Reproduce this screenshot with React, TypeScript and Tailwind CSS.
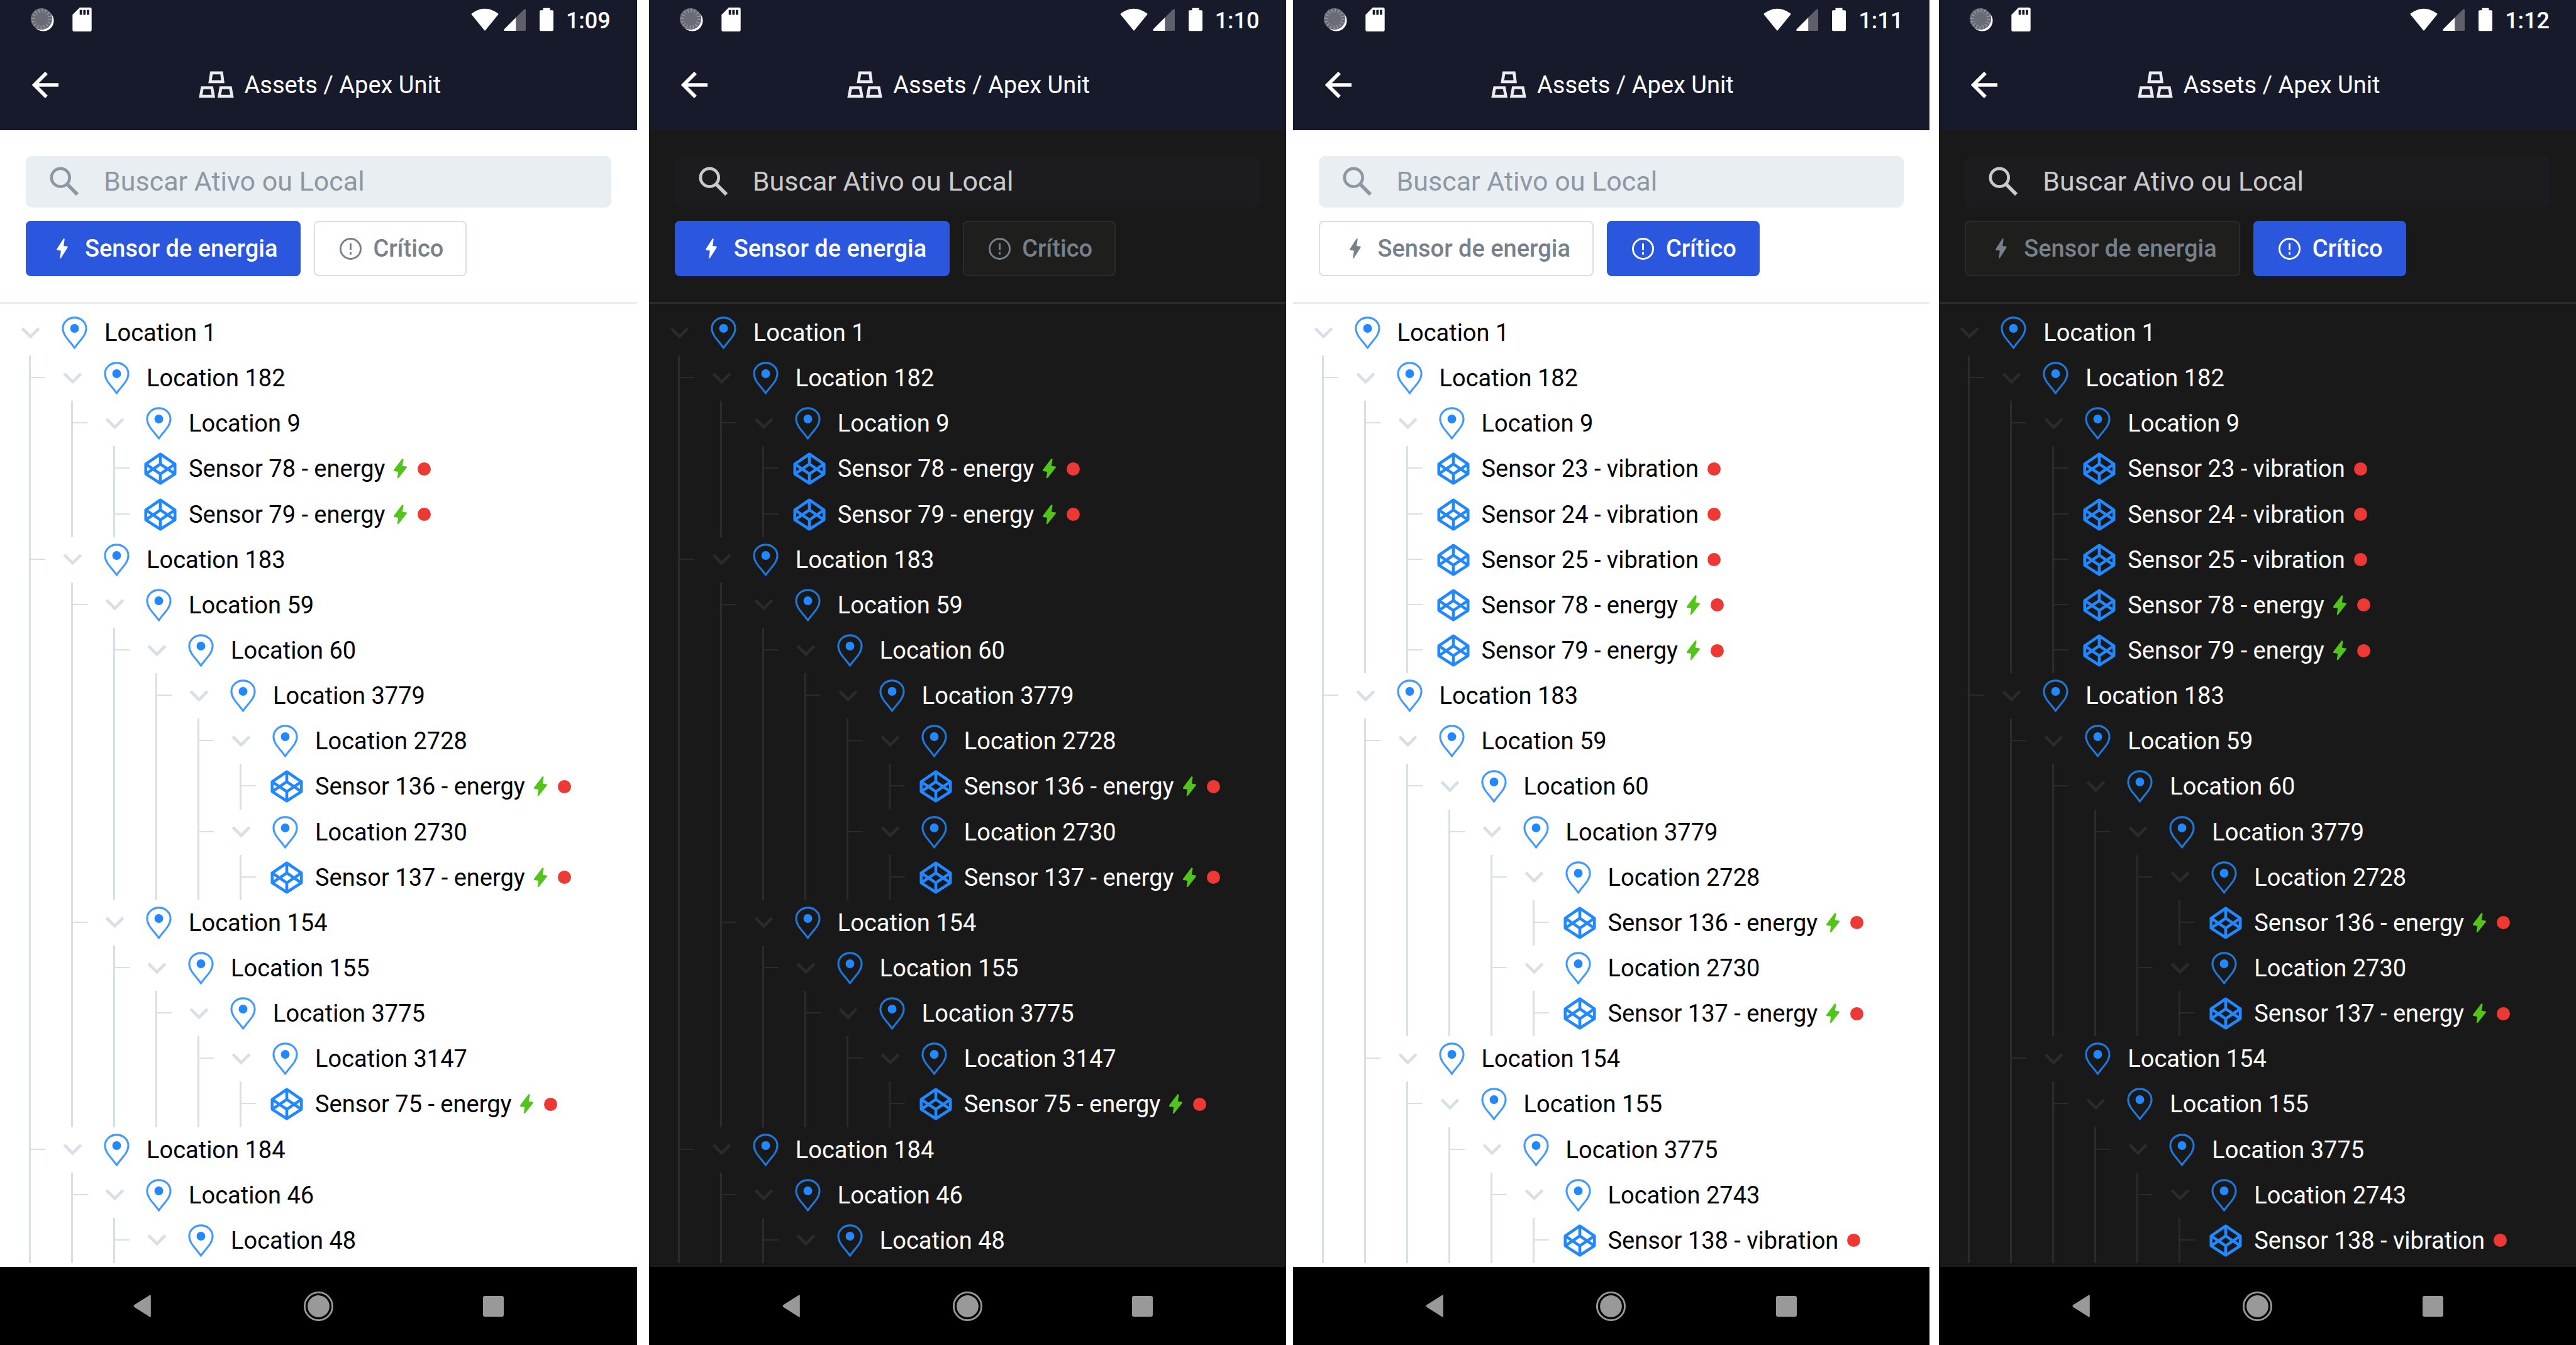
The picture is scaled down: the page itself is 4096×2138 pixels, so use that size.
import React from "react";

type Theme = {
  page: string;
  search: string;
  searchText: string;
  inactive: string;
  rule: string;
  line: string;
  chevron: string;
  label: string;
};

const light: Theme = {
  page: "bg-white",
  search: "bg-[#e9eef2]",
  searchText: "text-[#8e98a3] placeholder:text-[#8e98a3]",
  inactive: "bg-white border-[#d8dfe6] text-[#77818c]",
  rule: "border-[#e9eef2]",
  line: "bg-[#d8dfe6]",
  chevron: "text-[#d8dfe6]",
  label: "text-black",
};

const dark: Theme = {
  page: "bg-[#191919]",
  search: "bg-[#1c1b1f]",
  searchText: "text-[#cacaca] placeholder:text-[#cacaca]",
  inactive: "bg-[#1e1e1c] border-[#2b2b2b] text-[#77818c]",
  rule: "border-[#2b2b2b]",
  line: "bg-[#2b2b2b]",
  chevron: "text-[#2b2b2b]",
  label: "text-white",
};

type Row = { depth: number; name: string; kind: "location" | "energy" | "vibration" };

const loc = (depth: number, n: number): Row => ({ depth, name: `Location ${n}`, kind: "location" });
const energy = (depth: number, n: number): Row => ({ depth, name: `Sensor ${n} - energy`, kind: "energy" });
const vibration = (depth: number, n: number): Row => ({ depth, name: `Sensor ${n} - vibration`, kind: "vibration" });

const deepBranch: Row[] = [
  loc(1, 183), loc(2, 59), loc(3, 60), loc(4, 3779), loc(5, 2728), energy(5, 136),
  loc(5, 2730), energy(5, 137), loc(2, 154), loc(3, 155), loc(4, 3775),
];

const energyRows: Row[] = [
  loc(0, 1), loc(1, 182), loc(2, 9), energy(2, 78), energy(2, 79),
  ...deepBranch, loc(5, 3147), energy(5, 75), loc(1, 184), loc(2, 46), loc(3, 48),
];

const criticalRows: Row[] = [
  loc(0, 1), loc(1, 182), loc(2, 9), vibration(2, 23), vibration(2, 24), vibration(2, 25),
  energy(2, 78), energy(2, 79), ...deepBranch, loc(5, 2743), vibration(5, 138),
];

function PinIcon() {
  return (
    <svg viewBox="0 0 44 56" className="h-[52px] w-[41px] text-[#2188ff]" fill="none" aria-hidden="true">
      <path d="M22 54C14 42 2 33 2 20.500a20 18.500 0 0 1 40 0C42 33 30 42 22 54z" stroke="currentColor" strokeOpacity="0.85" strokeWidth="3.300" strokeLinejoin="round" />
      <circle cx="22" cy="20.500" r="7.500" fill="currentColor" />
    </svg>
  );
}

function CubeIcon() {
  return (
    <svg viewBox="0 0 56 56" className="size-[52px] text-[#2188ff]" fill="none" stroke="currentColor" strokeWidth="5" strokeLinejoin="round" aria-hidden="true">
      <path d="M28 3 53 20v17L28 53 3 37V20zM28 3v17M28 37v16M3 20l25 17 25-17M3 37l25-17 25 17" />
    </svg>
  );
}

function TreeRow({ row, theme }: { row: Row; theme: Theme }) {
  const isLocation = row.kind === "location";
  const guides = Array.from({ length: isLocation ? row.depth : row.depth + 1 });
  return (
    <li className="flex min-h-0 flex-1 items-center pl-[15px]">
      {guides.map((_, i) => (
        <span key={i} className="flex h-full w-[67px] shrink-0 pl-[31px]">
          <span className={`h-full w-[3px] ${theme.line}`} />
          {i === guides.length - 1 && <span className={`mt-[34px] h-0.5 w-[23px] ${theme.line}`} />}
        </span>
      ))}
      {isLocation && (
        <button type="button" aria-label={`Recolher ${row.name}`} className={`flex w-[67px] shrink-0 justify-center ${theme.chevron}`}>
          <svg viewBox="0 0 32 20" className="h-[19px] w-[31px]" fill="none" stroke="currentColor" strokeWidth="5" aria-hidden="true">
            <path d="M2 2 16 16 30 2" />
          </svg>
        </button>
      )}
      <span className={`flex w-[69px] shrink-0 items-center ${isLocation ? "pl-[16px]" : "pl-[13px]"}`}>
        {isLocation ? <PinIcon /> : <CubeIcon />}
      </span>
      <span className={`pl-[15px] text-[38px] leading-[56px] whitespace-nowrap ${theme.label}`}>{row.name}</span>
      <span className="flex items-center gap-[17px] pl-[14px]">
        {row.kind === "energy" && (
          <svg viewBox="0 0 67 100" className="h-[32px] w-[21px] text-[#52c41a]" fill="currentColor" aria-hidden="true">
            <path d="M43 0 50 2 44 36 67 40 66 45 25 97 18 99 23 66 0 62V56z" />
          </svg>
        )}
        {!isLocation && <span className="size-[21px] rounded-full bg-[#ed3833]" />}
      </span>
    </li>
  );
}

function StatusBar({ time }: { time: string }) {
  return (
    <div className="flex h-[62px] items-center pl-[48px] pr-[42px]">
      <svg viewBox="0 0 40 40" className="size-[38px]" aria-hidden="true">
        <circle cx="22" cy="22" r="17.500" fill="#fff" />
        <circle cx="19" cy="19" r="18" fill="#696b77" />
        <circle cx="19" cy="19" r="14" fill="none" stroke="#9c9da5" strokeWidth="6" strokeDasharray="1.500 4" />
      </svg>
      <svg viewBox="0 0 32 40" className="ml-[29px] h-[38px] w-[31px]" aria-hidden="true">
        <path d="M12 0h17a3 3 0 0 1 3 3v34a3 3 0 0 1-3 3H3a3 3 0 0 1-3-3V12z" fill="#fff" />
        <path d="M12 4h4v8h-4zM18 4h4v8h-4zM24 4h4v8h-4z" fill="#171a2b" />
      </svg>
      <div className="ml-auto flex items-center">
        <svg viewBox="0 0 48 40" className="h-[37px] w-[44px]" aria-hidden="true">
          <path d="M1 9Q24-8 47 9 48 10 47 11L25 38Q24 39.500 23 38L1 11Q0 10 1 9z" fill="#fff" />
        </svg>
        <svg viewBox="0 0 38 38" className="ml-[8px] size-[35px]" aria-hidden="true">
          <path d="M35 1q3-2 3 1v34q0 2-2 2H21V15z" fill="#5d5f6b" />
          <path d="M21 15v23H2Q-1 38 1 35z" fill="#fff" />
        </svg>
        <svg viewBox="0 0 24 40" className="ml-[22px] h-[38px] w-[22px]" aria-hidden="true">
          <path d="M6 0h12v4h4q2 0 2 2v32q0 2-2 2H2q-2 0-2-2V6q0-2 2-2h4z" fill="#fff" />
        </svg>
        <span className="ml-[20px] pt-[3px] text-[36px] font-medium leading-[44px] text-white">{time}</span>
      </div>
    </div>
  );
}

function Header() {
  return (
    <div className="flex h-[145px] items-center px-[51px]">
      <button type="button" aria-label="Voltar" className="text-white">
        <svg viewBox="0 0 44 44" className="size-[42px]" fill="none" stroke="currentColor" strokeWidth="6" aria-hidden="true">
          <path d="M44 22H4M24 2 4 22l20 20" />
        </svg>
      </button>
      <h1 className="flex flex-1 items-center justify-center gap-[17px] pr-[38px] text-[38px] leading-[48px] text-white">
        <svg viewBox="0 0 178 138" className="h-[43px] w-[56px]" fill="none" stroke="#ebecef" strokeWidth="15" aria-hidden="true">
          <path d="M64 9H116L122 54H57zM17 85H66L74 129H9zM112 85H161L169 129H104z" />
        </svg>
        Assets / Apex Unit
      </h1>
    </div>
  );
}

function FilterButton({ active, theme, icon, children }: { active: boolean; theme: Theme; icon: React.ReactNode; children: React.ReactNode }) {
  const tone = active ? "bg-[#2a57de] border-[#2a57de] text-white" : theme.inactive;
  return (
    <button type="button" aria-pressed={active} className={`flex h-[88px] items-center gap-[18px] rounded-[8px] border-2 pl-[38px] pr-[35px] text-[38px] font-medium leading-[48px] whitespace-nowrap ${tone}`}>
      <span className="flex w-[36px] justify-center">{icon}</span>
      <span>{children}</span>
    </button>
  );
}

function NavBar() {
  return (
    <nav className="flex h-[124px] shrink-0 items-center justify-center gap-[235px] bg-black">
      <button type="button" aria-label="Anterior">
        <svg viewBox="0 0 44 44" className="size-[40px]" fill="#999" aria-hidden="true">
          <path d="M35 4v36q0 2-2 1L6 24q-2-2 0-4L33 3q2-1 2 1z" />
        </svg>
      </button>
      <button type="button" aria-label="Início">
        <svg viewBox="0 0 50 50" className="size-[47px]" aria-hidden="true">
          <circle cx="25" cy="25" r="23.500" fill="none" stroke="#999" strokeWidth="3" />
          <circle cx="25" cy="25" r="18.500" fill="#999" />
        </svg>
      </button>
      <button type="button" aria-label="Recentes" className="flex w-[40px] justify-center">
        <span className="size-[33px] rounded-[3px] bg-[#999]" />
      </button>
    </nav>
  );
}

function Phone({ time, theme, filter, rows }: { time: string; theme: Theme; filter: "energy" | "critical"; rows: Row[] }) {
  return (
    <section className={`flex min-h-0 min-w-0 flex-col ${theme.page}`}>
      <header className="bg-[#171a2b]">
        <StatusBar time={time} />
        <Header />
      </header>
      <div className={`border-b-3 px-[41px] pt-[41px] pb-[41px] ${theme.rule}`}>
        <label className={`flex h-[82px] items-center rounded-[10px] pb-[2px] pl-[38px] ${theme.search} ${theme.searchText}`}>
          <svg viewBox="0 0 48 48" className="size-[46px] shrink-0" fill="none" stroke="currentColor" strokeWidth="5" aria-hidden="true">
            <circle cx="18" cy="18" r="15" />
            <path d="M29 29 46 46" strokeWidth="6" />
          </svg>
          <input type="text" aria-label="Buscar Ativo ou Local" placeholder="Buscar Ativo ou Local" className={`ml-[40px] min-w-0 flex-1 bg-transparent text-[43px] leading-[56px] outline-none ${theme.searchText}`} />
        </label>
        <div className="mt-[21px] flex gap-[21px]">
          <FilterButton
            active={filter === "energy"}
            theme={theme}
            icon={
              <svg viewBox="0 0 56 102" className="h-[32px] w-[18px]" fill="currentColor" aria-hidden="true">
                <path d="M35 0 40 2 35 38 56 41 55 46 22 99 16 102 21 62 0 59V54z" />
              </svg>
            }
          >
            Sensor de energia
          </FilterButton>
          <FilterButton
            active={filter === "critical"}
            theme={theme}
            icon={
              <svg viewBox="0 0 36 36" className="size-[35px]" fill="none" stroke="currentColor" strokeWidth="3" aria-hidden="true">
                <circle cx="18" cy="18" r="16.500" />
                <path d="M18 9v11M18 23.500v4" />
              </svg>
            }
          >
            Crítico
          </FilterButton>
        </div>
      </div>
      <ul className="mb-[6px] flex min-h-0 flex-1 flex-col pt-[10px]">
        {rows.map((row, i) => <TreeRow key={i} row={row} theme={theme} />)}
      </ul>
      <NavBar />
    </section>
  );
}

export default function App() {
  return (
    <main className="grid h-screen grid-cols-[1fr_19px_1fr_11px_1fr_15px_1fr] overflow-hidden bg-white font-[Roboto,sans-serif]">
      <Phone time="1:09" theme={light} filter="energy" rows={energyRows} />
      <span />
      <Phone time="1:10" theme={dark} filter="energy" rows={energyRows} />
      <span />
      <Phone time="1:11" theme={light} filter="critical" rows={criticalRows} />
      <span />
      <Phone time="1:12" theme={dark} filter="critical" rows={criticalRows} />
    </main>
  );
}
